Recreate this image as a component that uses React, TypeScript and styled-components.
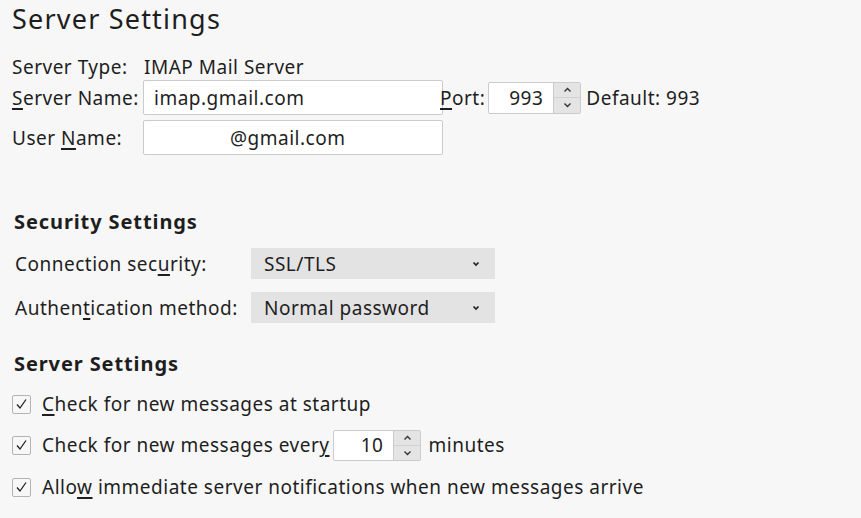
import React from "react";
import styled, { createGlobalStyle } from "styled-components";

const FONT = `"Noto Sans", "Open Sans", sans-serif`;

const Global = createGlobalStyle`
  html, body { margin: 0; padding: 0; background: #f7f7f7; }
  body { font-family: ${FONT}; color: #1e1e1e; }
`;

const Page = styled.div`
  width: 861px;
  height: 518px;
  overflow: hidden;
  background: #f7f7f7;
  padding-left: 12px;
  box-sizing: border-box;
  display: flex;
  flex-direction: column;
  font-size: 19px;
  letter-spacing: 0.5px;
`;

const Title = styled.h1`
  margin: 0;
  font-weight: 400;
  font-size: 27px;
  letter-spacing: 1.2px;
  line-height: 38px;
  height: 38px;
`;

const FieldRow = styled.div<{ $mt: number; $h: number }>`
  display: flex;
  align-items: center;
  height: ${(p) => p.$h}px;
  margin-top: ${(p) => p.$mt}px;
  white-space: nowrap;
`;

const FieldLabel = styled.span<{ $w: number }>`
  width: ${(p) => p.$w}px;
  flex: none;
  white-space: nowrap;
`;

const Text = styled.span<{ $ml?: number }>`
  white-space: nowrap;
  margin-left: ${(p) => p.$ml ?? 0}px;
`;

const U = styled.span`
  text-decoration: underline;
  text-underline-offset: 3px;
  text-decoration-thickness: 1.5px;
`;

const TextBox = styled.div<{ $indent?: number }>`
  width: 300px;
  height: 35px;
  flex: none;
  box-sizing: border-box;
  background: #ffffff;
  border: 1px solid #cbcbcb;
  border-radius: 2px;
  display: flex;
  align-items: center;
  padding-left: ${(p) => p.$indent ?? 10}px;
  white-space: nowrap;
`;

const Spinner = styled.div<{ $w: number; $h: number; $ml: number }>`
  width: ${(p) => p.$w}px;
  height: ${(p) => p.$h}px;
  margin-left: ${(p) => p.$ml}px;
  flex: none;
  box-sizing: border-box;
  background: #ffffff;
  border: 1px solid #cbcbcb;
  border-radius: 2px;
  display: flex;
  align-items: stretch;
`;

const SpinValue = styled.div`
  flex: 1;
  display: flex;
  align-items: center;
  justify-content: flex-end;
  padding-right: 10px;
`;

const SpinButtons = styled.div`
  width: 26px;
  display: flex;
  flex-direction: column;
  border-left: 1px solid #cbcbcb;
  background: #e4e4e4;
`;

const SpinBtn = styled.div`
  flex: 1;
  display: flex;
  align-items: center;
  justify-content: center;
  & + & { border-top: 1px solid #d2d2d2; }
`;

const SectionHeading = styled.h2<{ $mt: number }>`
  margin: ${(p) => p.$mt}px 0 0 2px;
  font-size: 20px;
  letter-spacing: 0.9px;
  font-weight: 700;
  line-height: 28px;
`;

const SelectGrid = styled.div`
  display: grid;
  grid-template-columns: 236px 244px;
  row-gap: 13px;
  margin: 12px 0 0 3px;
  align-items: center;
`;

const Select = styled.div`
  height: 31px;
  background: #e3e3e3;
  display: flex;
  align-items: center;
  justify-content: space-between;
  padding: 0 15px 0 13px;
  box-sizing: border-box;
`;

const CheckList = styled.div`
  display: flex;
  flex-direction: column;
  margin-top: 11px;
`;

const CheckRow = styled.div<{ $mt: number }>`
  display: flex;
  align-items: center;
  height: 30px;
  margin-top: ${(p) => p.$mt}px;
  white-space: nowrap;
`;

const Box = styled.div`
  width: 19px;
  height: 19px;
  box-sizing: border-box;
  border: 1px solid #b4b4b4;
  border-radius: 2px;
  margin-right: 11px;
  display: flex;
  align-items: center;
  justify-content: center;
`;

const Up = () => (
  <svg width="9" height="6" viewBox="0 0 9 6">
    <polyline points="1.5,4.5 4.5,1.5 7.5,4.5" fill="none" stroke="#333" strokeWidth="1.4" />
  </svg>
);
const Down = () => (
  <svg width="9" height="6" viewBox="0 0 9 6">
    <polyline points="1.5,1.5 4.5,4.5 7.5,1.5" fill="none" stroke="#333" strokeWidth="1.4" />
  </svg>
);
const Chevron = () => (
  <svg width="8" height="6" viewBox="0 0 8 6">
    <polyline points="1.5,1.5 4,4 6.5,1.5" fill="none" stroke="#222" strokeWidth="1.7" />
  </svg>
);
const Check = () => (
  <svg width="13" height="12" viewBox="0 0 13 12">
    <polyline points="2,6.5 5,10 11,1.5" fill="none" stroke="#222" strokeWidth="1.3" />
  </svg>
);

const SpinBox = ({ value, w, h, ml }: { value: string; w: number; h: number; ml: number }) => (
  <Spinner $w={w} $h={h} $ml={ml}>
    <SpinValue>{value}</SpinValue>
    <SpinButtons>
      <SpinBtn><Up /></SpinBtn>
      <SpinBtn><Down /></SpinBtn>
    </SpinButtons>
  </Spinner>
);

export default function App() {
  return (
    <Page>
      <Global />
      <Title>Server Settings</Title>
      <FieldRow $mt={17} $h={24}>
        <FieldLabel $w={132}>Server Type:</FieldLabel>
        <Text>IMAP Mail Server</Text>
      </FieldRow>
      <FieldRow $mt={1} $h={35}>
        <FieldLabel $w={131}><U>S</U>erver Name:</FieldLabel>
        <TextBox>imap.gmail.com</TextBox>
        <Text $ml={-3}><U>P</U>ort:</Text>
        <SpinBox value="993" w={93} h={32} ml={3} />
        <Text $ml={5}>Default: 993</Text>
      </FieldRow>
      <FieldRow $mt={5} $h={35}>
        <FieldLabel $w={131}>User <U>N</U>ame:</FieldLabel>
        <TextBox $indent={86}>@gmail.com</TextBox>
      </FieldRow>

      <SectionHeading $mt={53}>Security Settings</SectionHeading>
      <SelectGrid>
        <Text>Connection sec<U>u</U>rity:</Text>
        <Select>SSL/TLS<Chevron /></Select>
        <Text>Authen<U>t</U>ication method:</Text>
        <Select>Normal password<Chevron /></Select>
      </SelectGrid>

      <SectionHeading $mt={27}>Server Settings</SectionHeading>
      <CheckList>
        <CheckRow $mt={0}>
          <Box><Check /></Box>
          <Text><U>C</U>heck for new messages at startup</Text>
        </CheckRow>
        <CheckRow $mt={11}>
          <Box><Check /></Box>
          <Text>Check for new messages ever<U>y</U></Text>
          <SpinBox value="10" w={88} h={31} ml={4} />
          <Text $ml={7}>minutes</Text>
        </CheckRow>
        <CheckRow $mt={12}>
          <Box><Check /></Box>
          <Text>Allo<U>w</U> immediate server notifications when new messages arrive</Text>
        </CheckRow>
      </CheckList>
    </Page>
  );
}
